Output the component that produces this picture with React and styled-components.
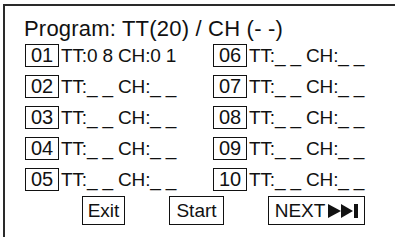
import React from 'react'
import styled, { createGlobalStyle } from 'styled-components';

const GlobalStyle = createGlobalStyle`
  html, body {
    margin: 0;
    padding: 0;
    background: #ffffff;
    overflow: hidden;
  }
  body {
    font-family: "Liberation Sans", Arial, sans-serif;
    color: #111111;
  }
`;

// the panel is cut off by the screenshot on the right and at the bottom
const Frame = styled.div`
  margin: 4px 0 0 3px;
  width: calc(100vw - 3px);
  height: calc(100vh - 4px);
  border-top: 2px solid #2a2a2a;
  border-left: 2px solid #2a2a2a;
  padding: 11px 0 0 19px;
  box-sizing: border-box;
  overflow: hidden;
`;

const Title = styled.div`
  font-size: 22px;
  line-height: 24px;
  letter-spacing: 0.2px;
  margin-bottom: 3px;
`;

const Grid = styled.div`
  display: grid;
  grid-template-columns: 188px 188px;
  grid-auto-rows: 23px;
  row-gap: 8px;
  margin-left: 1px;
`;

const Row = styled.div`
  display: flex;
  flex-direction: row;
  align-items: center;
  gap: 2px;
`;

const Num = styled.div`
  width: 34px;
  height: 23px;
  box-sizing: border-box;
  border: 1.5px solid #111111;
  font-size: 20px;
  line-height: 20px;
  text-align: center;
`;

const Entry = styled.span`
  font-size: 19px;
  letter-spacing: -0.15px;
  white-space: pre;
`;

const Buttons = styled.div`
  display: flex;
  flex-direction: row;
  gap: 44px;
  margin-top: 5px;
  padding-left: 58px;
`;

const Button = styled.div`
  height: 29px;
  width: ${(props) => props.w}px;
  box-sizing: border-box;
  border: 1.5px solid #111111;
  font-size: 19px;
  display: flex;
  align-items: center;
  justify-content: center;
  gap: 3px;
`;

const entries = [
    ['01', 'TT:0 8 CH:0 1'],
    ['06', 'TT:_ _ CH:_ _'],
    ['02', 'TT:_ _ CH:_ _'],
    ['07', 'TT:_ _ CH:_ _'],
    ['03', 'TT:_ _ CH:_ _'],
    ['08', 'TT:_ _ CH:_ _'],
    ['04', 'TT:_ _ CH:_ _'],
    ['09', 'TT:_ _ CH:_ _'],
    ['05', 'TT:_ _ CH:_ _'],
    ['10', 'TT:_ _ CH:_ _'],
];

const NextIcon = () => (
    <svg width="30" height="14" viewBox="0 0 30 14">
        <polygon points="0,0 13,7 0,14" fill="#111" />
        <polygon points="13,0 25,7 13,14" fill="#111" />
        <rect x="26" y="0" width="4" height="14" fill="#111" />
    </svg>
);

const App = () => {
    return (
        <>
            <GlobalStyle />
            <Frame>
                <Title>Program: TT(20) / CH (- -)</Title>
                <Grid>
                    {entries.map(([num, text]) => (
                        <Row key={num}>
                            <Num>{num}</Num>
                            <Entry>{text}</Entry>
                        </Row>
                    ))}
                </Grid>
                <Buttons>
                    <Button w={43}>Exit</Button>
                    <Button w={55}>Start</Button>
                    <Button w={97}>NEXT<NextIcon /></Button>
                </Buttons>
            </Frame>
        </>
    )
}

export default App
